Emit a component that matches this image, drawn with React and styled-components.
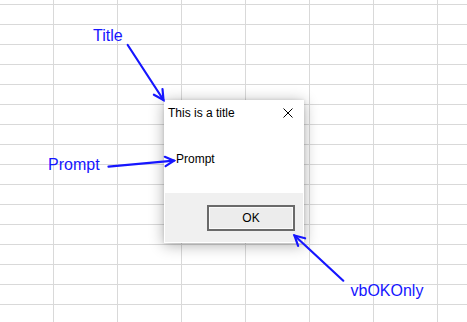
import React from "react";
import styled, { createGlobalStyle } from "styled-components";

const Global = createGlobalStyle`
  html, body { margin: 0; padding: 0; background: #ffffff; }
  body { font-family: "Liberation Sans", Arial, sans-serif; }
`;

const Sheet = styled.div`
  position: relative;
  width: 467px;
  height: 322px;
  overflow: hidden;
  background-color: #ffffff;
  background-image:
    linear-gradient(to right, #d9d9d9 1px, transparent 1px),
    linear-gradient(to bottom, #d9d9d9 1px, transparent 1px);
  background-size: 64px 20px;
  background-position: 53px 0, 0 4px;
`;

const Dialog = styled.div`
  position: absolute;
  left: 164px;
  top: 100px;
  width: 140px;
  height: 143px;
  box-sizing: border-box;
  background: #ffffff;
  padding: 1px 1px 1px 1px;
  display: flex;
  flex-direction: column;
  box-shadow: 0 2px 14px rgba(0, 0, 0, 0.32), 0 0 3px rgba(0, 0, 0, 0.12);
  font-family: "Liberation Sans", Arial, sans-serif;
  font-size: 12px;
  line-height: 16px;
  color: #000000;
`;

const TitleBar = styled.div`
  height: 30px;
  display: flex;
  align-items: flex-start;
  justify-content: space-between;
  padding: 4px 10px 0 3px;
  box-sizing: border-box;
`;

const CloseIcon = styled.svg`
  margin-top: 3px;
  display: block;
`;

const Body = styled.div`
  flex: 1;
  padding: 20px 0 0 11px;
  box-sizing: border-box;
`;

const Footer = styled.div`
  height: 49px;
  background: #f0f0f0;
  display: flex;
  justify-content: flex-end;
  align-items: flex-start;
  padding: 12px 8px 0 0;
  box-sizing: border-box;
`;

const Button = styled.div`
  width: 88px;
  height: 26px;
  box-sizing: border-box;
  border: 2px solid #6a6a6a;
  background: #ececec;
  box-shadow: inset 0 0 0 1px #fafafa;
  display: flex;
  align-items: center;
  justify-content: center;
  font-size: 12px;
`;

const Label = styled.div`
  position: absolute;
  left: ${(p) => p.x}px;
  top: ${(p) => p.y}px;
  font-family: "Liberation Sans", Arial, sans-serif;
  font-size: 16px;
  line-height: 16px;
  color: #1616ff;
  white-space: nowrap;
`;

const Overlay = styled.svg`
  position: absolute;
  left: 0;
  top: 0;
  pointer-events: none;
`;

const arrows = [
  { line: "M127.7 45 L163.5 100", head: "M162.5 89 L163.5 100 L153.9 94.7" },
  { line: "M108.5 166.7 L174 160.7", head: "M164.8 156.8 L174 160.7 L165.6 166.2" },
  { line: "M343.3 280.7 L294.5 235.5", head: "M298.1 245.9 L294.5 235.5 L305.1 238.3" },
];

export default function App() {
  return (
    <>
      <Global />
      <Sheet>
        <Dialog>
          <TitleBar>
            <span>This is a title</span>
            <CloseIcon width="10" height="10" viewBox="0 0 10 10">
              <path d="M0.5 0.5 L9.5 9.5 M9.5 0.5 L0.5 9.5" stroke="#000" strokeWidth="1" fill="none" />
            </CloseIcon>
          </TitleBar>
          <Body>Prompt</Body>
          <Footer>
            <Button>OK</Button>
          </Footer>
        </Dialog>
        <Label x={93} y={28}>Title</Label>
        <Label x={48} y={156.5}>Prompt</Label>
        <Label x={350.5} y={282.5}>vbOKOnly</Label>
        <Overlay width="467" height="322" viewBox="0 0 467 322">
          {arrows.map((a, i) => (
            <g key={i} stroke="#1616ff" strokeWidth="2.2" fill="none" strokeLinecap="round" strokeLinejoin="miter">
              <path d={a.line} />
              <path d={a.head} />
            </g>
          ))}
        </Overlay>
      </Sheet>
    </>
  );
}
